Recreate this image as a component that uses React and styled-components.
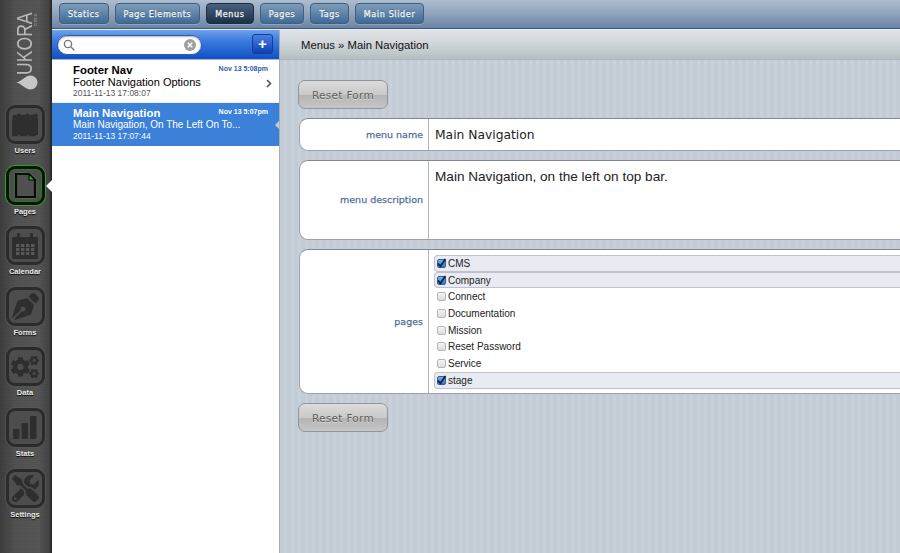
import React from "react";
import styled, { createGlobalStyle } from "styled-components";
import { FaPenNib, FaCogs, FaTools } from "react-icons/fa";

const Global = createGlobalStyle`
  html, body { margin: 0; padding: 0; height: 553px; overflow: hidden; background: #c3cbd5; }
  #root { height: 553px; }
  * { box-sizing: border-box; }
`;

const Page = styled.div`
  display: flex; width: 900px; height: 553px; overflow: hidden;
  font-family: "Liberation Sans", Arial, sans-serif;
`;
const Side = styled.nav`
  position: relative; width: 52px; flex: none; display: flex; flex-direction: column; align-items: center;
  background:
    repeating-linear-gradient(0deg, rgba(0,0,0,.05) 0 1px, transparent 1px 2px),
    linear-gradient(90deg, #3e3e3e 0, #525252 30%, #565656 75%, #444 94%, #222 100%);
`;
const Logo = styled.div`
  height: 105px; width: 100%; display: flex; flex-direction: column; align-items: center;
  padding: 13px 0 0 2px;
`;
const LogoText = styled.div`
  writing-mode: vertical-rl; transform: rotate(180deg); display: flex; flex-direction: column; align-items: flex-end;
  height: 62px; color: #b9b9b9;
`;
const LogoWord = styled.span`
  display: block; height: 62px; width: 16px; font-size: 22px; line-height: 16px; white-space: nowrap;
  transform: scaleY(.8); transform-origin: top center;
`;
const LogoCms = styled.small`
  display: block; width: 5px; font-size: 6px; line-height: 5px; letter-spacing: .6px; color: #9a9a9a;
`;
const NavItem = styled.div`
  position: relative; height: 60.6px; width: 52px; flex: none; display: flex; flex-direction: column; align-items: center; padding-right: 2px;
`;
const IconBox = styled.div`
  width: 39px; height: 39px; border-radius: 9px; display: flex; align-items: center; justify-content: center;
  color: #2e2e2e; background: #4d4d4d;
  border: 3px solid ${p => p.$on ? "#111" : "#2b2b2b"};
  box-shadow: ${p => p.$on ? "0 0 0 1px #28a020, inset 0 0 0 1px #2c7a22" : "0 0 1px 1px rgba(90,90,90,.6)"};
`;
const NavLabel = styled.div`
  margin-top: 2px; color: #eee; font-size: 7.5px; font-weight: bold; line-height: 10px; text-shadow: 0 1px 1px #000;
`;
const Notch = styled.span`
  position: absolute; right: 0; top: 14.5px; width: 0; height: 0;
  border-top: 6px solid transparent; border-bottom: 6px solid transparent; border-right: 6px solid #fff;
`;
const Right = styled.div`
  flex: 1; min-width: 0; display: flex; flex-direction: column;
`;
const TopBar = styled.div`
  height: 30px; flex: none; display: flex; gap: 6px; padding: 3px 0 0 7px;
  background: linear-gradient(#aebdcf, #8ea3bb 50%, #6682a3);
  border-bottom: 1px solid #e8ebee; box-shadow: inset 0 -1px 0 #3f5a7c;
`;
const Tab = styled.div`
  height: 21px; padding: 1px 8px 0; border-radius: 4px; display: flex; align-items: center;
  font-family: "DejaVu Sans", sans-serif; font-size: 8px; letter-spacing: .65px; color: #eef3f8;
  -webkit-text-stroke: .3px #eef3f8;
  text-shadow: 0 -1px 0 rgba(0,0,0,.45);
  border: 1px solid ${p => p.$on ? "#1e2c3e" : "#3f607f"};
  background: ${p => p.$on ? "linear-gradient(#47617f, #1d2f47)" : "linear-gradient(#7f9dbb, #3f6a96)"};
  box-shadow: 0 1px 0 rgba(255,255,255,.2);
`;
const Body = styled.div`
  flex: 1; display: flex; min-height: 0;
`;
const ListPanel = styled.div`
  width: 228px; flex: none; background: #fff; border-right: 1px solid #a8aeb5; display: flex; flex-direction: column;
`;
const SearchBar = styled.div`
  height: 30px; flex: none; display: flex; align-items: flex-start; justify-content: space-between; padding: 5px 6px 0 5px;
  background: linear-gradient(#6fa2ea, #3d7de0 35%, #0f50c6);
  border-bottom: 1px solid #a9b6c6;
`;
const Search = styled.div`
  width: 145px; height: 20px; border-radius: 10px; background: #fff; border: 1px solid #2a5fa8; display: flex;
  align-items: center; justify-content: space-between; padding: 0 5px 0 5px;
  box-shadow: inset 0 1px 2px rgba(0,0,0,.3);
`;
const AddBtn = styled.div`
  width: 21px; height: 20px; margin-top: -1px; border-radius: 3px; border: 1px solid #123f93; color: #fff; font-weight: bold;
  font-size: 15px; line-height: 17px; text-align: center; background: linear-gradient(#4b7fe0, #0f3fb8);
`;
const Item = styled.div`
  position: relative; height: 43px; padding: 3px 11px 0 21px; flex: none;
  background: ${p => p.$on ? "#3b80d9" : "#fff"};
  color: ${p => p.$on ? "#fff" : "#000"};
  border-bottom: 1px solid ${p => p.$on ? "#3b80d9" : "#eee"};
`;
const ItemHead = styled.div`
  display: flex; justify-content: space-between; align-items: flex-start; height: 13px;
  b { font-size: 11.4px; line-height: 14px; }
  span { font-size: 7px; font-weight: bold; line-height: 11px; color: ${p => p.$on ? "#fff" : "#2a5db0"}; }
`;
const ItemSub = styled.div` font-size: ${p => p.$on ? 10 : 11}px; line-height: 12px; white-space: nowrap; `;
const ItemDate = styled.div`
  font-size: 8.5px; line-height: 11px; color: ${p => p.$on ? "#fff" : "#555"};
`;
const Chevron = styled.svg` position: absolute; right: 7px; top: 19px; `;
const SelNotch = styled.span`
  position: absolute; right: 0; top: 18px; width: 0; height: 0;
  border-top: 4.5px solid transparent; border-bottom: 4.5px solid transparent; border-right: 4.5px solid #c3cbd5;
`;
const Main = styled.div`
  flex: 1; min-width: 0; display: flex; flex-direction: column;
  background: repeating-linear-gradient(90deg, #c3cbd5 0 4px, #c8d0da 4px 7px);
`;
const Crumb = styled.div`
  height: 30px; flex: none; display: flex; align-items: center; padding: 0 0 0 21px; font-size: 11.3px; color: #111;
  background: linear-gradient(#e0e3e6, #d3d8dc 40%, #b4bfc0);
  border-bottom: 1px solid #adb4bc;
`;
const Form = styled.div`
  padding: 20px 0 0 18px; display: flex; flex-direction: column; width: 640px;
`;
const Reset = styled.div`
  width: 90px; height: 29px; border-radius: 7px; border: 1px solid #8f959c; display: flex; align-items: center; justify-content: center;
  margin-bottom: ${p => p.$mb || 0}px;
  font-family: "DejaVu Sans", sans-serif; font-size: 10.5px; letter-spacing: .3px; color: #5e5e5e; text-shadow: 0 1px 0 #ddd;
  background: linear-gradient(#dcdcdc, #c9c9c9 50%, #b4b4b4 52%, #c6c6c6);
`;
const Row = styled.div`
  display: flex; height: ${p => p.$h}px; margin: 0 0 9px 1px; background: #fff; border-radius: 9px 0 0 9px;
  border: 1px solid #9ba2ab; border-right: 0; border-top-color: #808893;
`;
const RowLabel = styled.div`
  width: 129px; flex: none; display: flex; align-items: center; justify-content: flex-end; padding-right: 5px;
  font-family: "DejaVu Sans", sans-serif; font-size: 9.5px; color: #4f7099; -webkit-text-stroke: .25px #4f7099;
  border-right: 1px solid #b3b8bf;
  padding-bottom: ${p => p.$pb || 0}px;
`;
const RowValue = styled.div`
  flex: 1; min-width: 0; padding: ${p => p.$pad || "1px 0 0 6px"}; display: flex; align-items: ${p => p.$top ? "flex-start" : "center"};
  font-size: ${p => p.$size || 13.6}px; line-height: 17px; color: #222;
  font-family: ${p => p.$dv ? '"DejaVu Sans", sans-serif' : '"Liberation Sans", Arial, sans-serif'};
`;
const Checks = styled.div` flex: 1; padding: 5px 0 0 5px; display: flex; flex-direction: column; `;
const Check = styled.div`
  height: 16.7px; flex: none; display: flex; align-items: center; gap: 2px;
  font-size: 10px; color: #222; border-radius: 4px 0 0 4px;
  ${p => p.$on ? "background: #e8ebf2; border: 1px solid #bcc3ce; border-right: 0; padding-left: 2px;" : "padding-left: 3px;"}
`;
const Box = styled.span`
  width: 9px; height: 9px; border-radius: 2px; flex: none; display: flex; align-items: center; justify-content: center;
  background: ${p => p.$on ? "linear-gradient(#7fb0e8,#2f78d0)" : "linear-gradient(#f4f4f4,#ddd)"};
  border: 1px solid ${p => p.$on ? "#345f94" : "#b5b5b5"};
  svg { flex: none; overflow: visible; }
`;

const Users = () => (
  <svg width="26" height="27" viewBox="0 0 30 27" fill="currentColor">
    {[3, 8, 13, 18, 23, 27].map((x, i) => (
      <g key={x}>
        <circle cx={x} cy={i % 2 ? 3.5 : 5} r="2.8" />
        <path d={`M${x - 3.6} ${i % 2 ? 6 : 7.5}h7.2l.6 19.500h-8.400z`} />
      </g>
    ))}
  </svg>
);
const Doc = () => (
  <svg width="23" height="27" viewBox="0 0 23 27" style={{ filter: "drop-shadow(0 0 1px #2fae25)" }}>
    <path d="M2 2h13l6 6v17H2z" fill="#505050" stroke="#0a0a0a" strokeWidth="2.2" />
    <path d="M15 2v6h6z" fill="#3aa52c" stroke="#0a0a0a" strokeWidth="1.200" />
  </svg>
);
const Calendar = () => (
  <svg width="28" height="28" viewBox="0 0 28 28" fill="currentColor">
    <path d="M2 5h24a1 1 0 0 1 1 1v20a1 1 0 0 1-1 1H2a1 1 0 0 1-1-1V6a1 1 0 0 1 1-1z" />
    <rect x="6" y="1" width="3" height="7" rx="1" /><rect x="19" y="1" width="3" height="7" rx="1" />
    <g fill="#585858">
      {[12, 16, 20].map(y => [5, 10, 15, 20].map(x => <rect key={x + "-" + y} x={x} y={y} width="3.4" height="3" />))}
    </g>
  </svg>
);
const Stats = () => (
  <svg width="26" height="26" viewBox="0 0 26 26" fill="currentColor">
    <rect x="1" y="15" width="6.5" height="10" rx="1" /><rect x="9.5" y="9" width="6.5" height="16" rx="1" /><rect x="18" y="2" width="6.5" height="23" rx="1" />
  </svg>
);
const Drop = () => (
  <svg width="22" height="15" viewBox="0 0 22 15" fill="#c6c6c6">
    <path d="M0 7.500C6 6.500 9 .5 14.500 .5a7 7 0 0 1 0 14C9 14.500 6 8.500 0 7.500z" />
  </svg>
);

const nav = [
  ["Users", <Users />], ["Pages", <Doc />, true], ["Calendar", <Calendar />],
  ["Forms", <FaPenNib size={27} />], ["Data", <FaCogs size={28} />],
  ["Stats", <Stats />], ["Settings", <FaTools size={27} />],
];
const tabs = ["Statics", "Page Elements", "Menus", "Pages", "Tags", "Main Slider"];
const pages = [["CMS", 1], ["Company", 1], ["Connect"], ["Documentation"], ["Mission"], ["Reset Password"], ["Service"], ["stage", 1]];

export default function App() {
  return (
    <Page>
      <Global />
      <Side>
        <Logo>
          <LogoText><LogoWord>UKORA</LogoWord><LogoCms>cms</LogoCms></LogoText>
          <Drop />
        </Logo>
        {nav.map(([label, icon, on]) => (
          <NavItem key={label}>
            <IconBox $on={on}>{icon}</IconBox>
            <NavLabel>{label}</NavLabel>
            {on && <Notch />}
          </NavItem>
        ))}
      </Side>
      <Right>
        <TopBar>
          {tabs.map(t => <Tab key={t} $on={t === "Menus"}>{t}</Tab>)}
        </TopBar>
        <Body>
          <ListPanel>
            <SearchBar>
              <Search>
                <svg width="12" height="12" viewBox="0 0 12 12" fill="none" stroke="#777" strokeWidth="1.4">
                  <circle cx="5" cy="5" r="3.6" /><path d="M8 8l3.200 3.200" />
                </svg>
                <svg width="12" height="12" viewBox="0 0 12 12">
                  <circle cx="6" cy="6" r="6" fill="#a0a0a0" />
                  <path d="M3.800 3.800l4.400 4.400M8.200 3.800l-4.400 4.400" stroke="#fff" strokeWidth="1.500" />
                </svg>
              </Search>
              <AddBtn>+</AddBtn>
            </SearchBar>
            <Item>
              <ItemHead><b>Footer Nav</b><span>Nov 13 5:08pm</span></ItemHead>
              <ItemSub>Footer Navigation Options</ItemSub>
              <ItemDate>2011-11-13 17:08:07</ItemDate>
              <Chevron width="6" height="9" viewBox="0 0 6 9" fill="none" stroke="#555" strokeWidth="1.600"><path d="M1 1l3.500 3.500L1 8" /></Chevron>
            </Item>
            <Item $on>
              <ItemHead $on><b>Main Navigation</b><span>Nov 13 5:07pm</span></ItemHead>
              <ItemSub $on>Main Navigation, On The Left On To...</ItemSub>
              <ItemDate $on>2011-11-13 17:07:44</ItemDate>
              <SelNotch />
            </Item>
          </ListPanel>
          <Main>
            <Crumb>Menus » Main Navigation</Crumb>
            <Form>
              <Reset $mb={9}>Reset Form</Reset>
              <Row $h={33}>
                <RowLabel>menu name</RowLabel>
                <RowValue $dv $size={12.3}>Main Navigation</RowValue>
              </Row>
              <Row $h={80}>
                <RowLabel $pb={2}>menu description</RowLabel>
                <RowValue $top $pad="7px 0 0 6px">Main Navigation, on the left on top bar.</RowValue>
              </Row>
              <Row $h={145}>
                <RowLabel>pages</RowLabel>
                <Checks>
                  {pages.map(([name, on]) => (
                    <Check key={name} $on={on}>
                      <Box $on={on}>
                        {on && <svg width="9" height="9" viewBox="0 0 9 9" fill="none" stroke="#10233f" strokeWidth="1.800"><path d="M1 4.500l2.400 2.800L8.500 0" /></svg>}
                      </Box>
                      {name}
                    </Check>
                  ))}
                </Checks>
              </Row>
              <Reset>Reset Form</Reset>
            </Form>
          </Main>
        </Body>
      </Right>
    </Page>
  );
}
